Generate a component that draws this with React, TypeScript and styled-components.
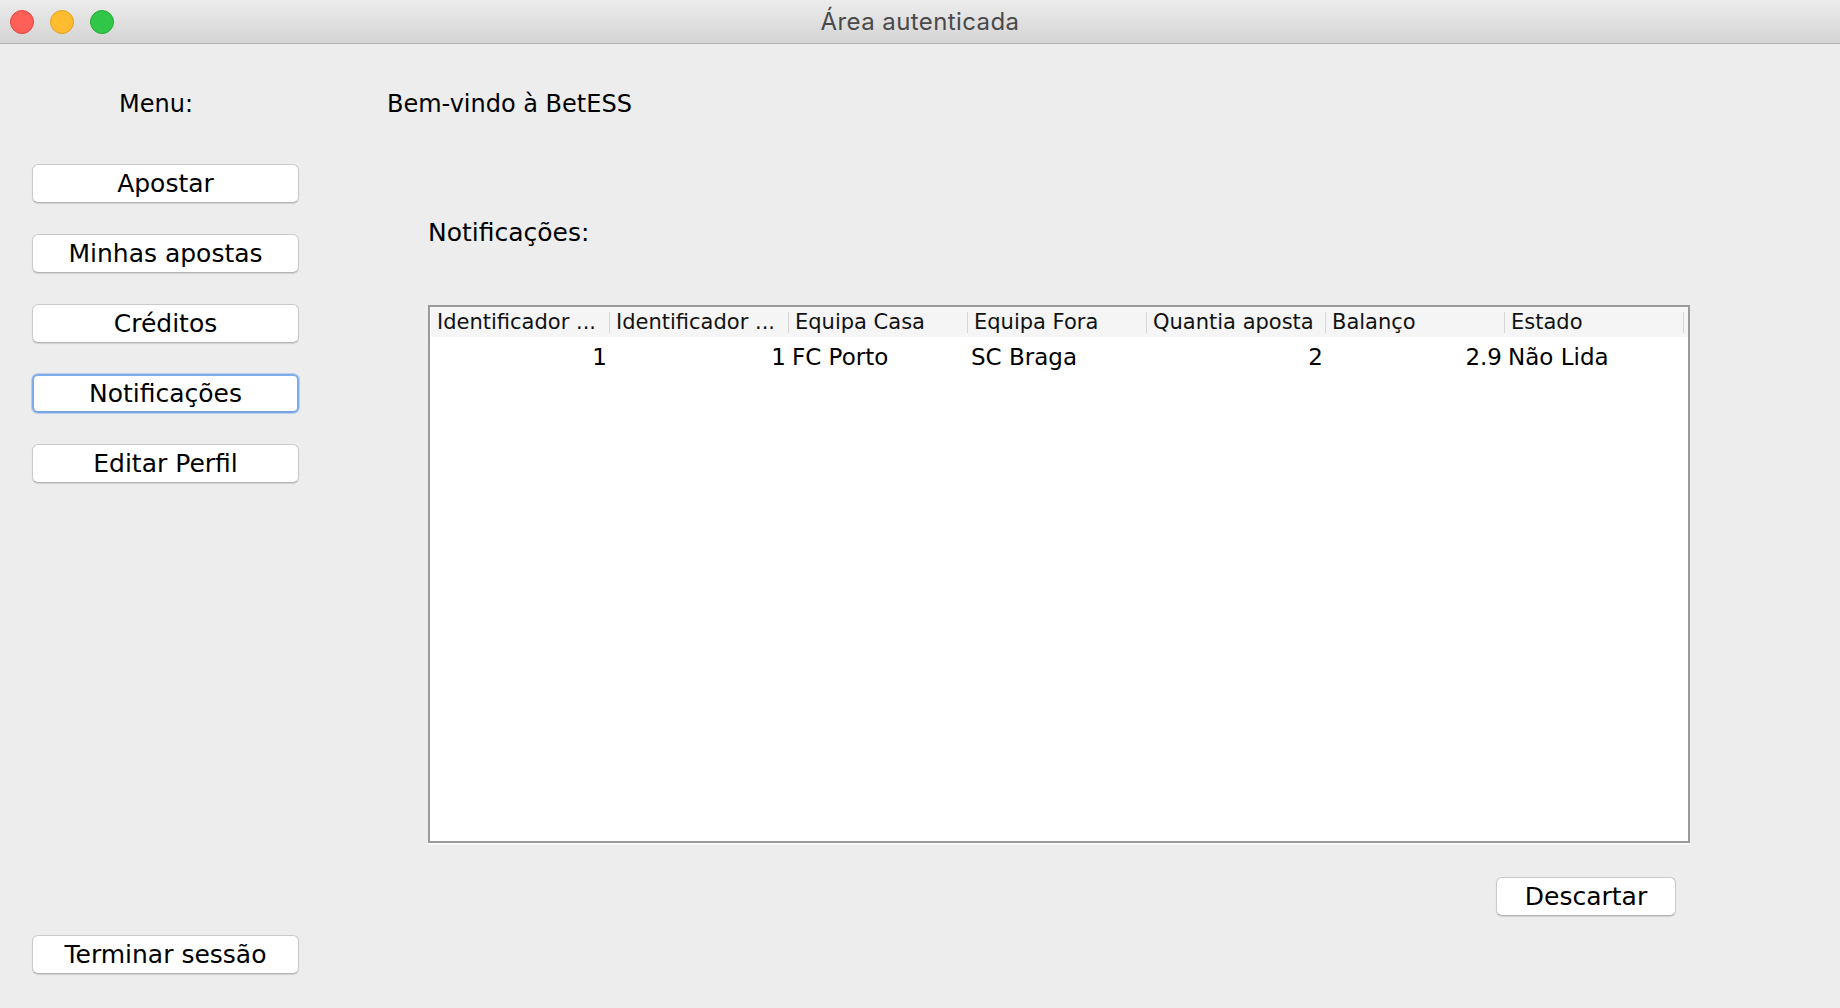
import React from "react";
import styled, { createGlobalStyle } from "styled-components";

const GlobalStyle = createGlobalStyle`
  html, body { margin: 0; padding: 0; background: #ececec; }
  body { font-family: "DejaVu Sans", "Noto Sans", sans-serif; color: #000; }
  * { box-sizing: border-box; }
`;

const Window = styled.div`
  width: 1840px;
  height: 1008px;
  display: flex;
  flex-direction: column;
  background: #ededed;
  overflow: hidden;
`;

const TitleBar = styled.div`
  height: 44px;
  flex: none;
  display: grid;
  grid-template-columns: 1fr auto 1fr;
  align-items: center;
  background: linear-gradient(#ececec, #d4d4d4);
  border-bottom: 1px solid #b3b3b3;
`;

const Lights = styled.div`
  display: flex;
  gap: 16px;
  padding-left: 10px;
`;

const Light = styled.span<{ $fill: string; $edge: string }>`
  width: 24px;
  height: 24px;
  border-radius: 50%;
  background: ${(p) => p.$fill};
  border: 1px solid ${(p) => p.$edge};
`;

const Title = styled.div`
  font-family: Inter, "Liberation Sans", sans-serif;
  font-size: 24px;
  letter-spacing: 0.4px;
  color: #4a4a4a;
  padding-bottom: 1px;
`;

const Body = styled.div`
  flex: 1;
  display: flex;
  min-height: 0;
`;

const Sidebar = styled.div`
  width: 330px;
  flex: none;
  display: flex;
  flex-direction: column;
  padding: 48px 0 34px 32px;
`;

const MenuLabel = styled.div`
  font-size: 24px;
  line-height: 24px;
  margin-left: 87px;
  margin-bottom: 48px;
`;

const MenuList = styled.div`
  display: flex;
  flex-direction: column;
  gap: 31px;
`;

const Button = styled.button<{ $focused?: boolean; $width?: number }>`
  width: ${(p) => p.$width ?? 267}px;
  height: 39px;
  padding: 0;
  font-family: "DejaVu Sans", sans-serif;
  font-size: 25px;
  color: #000;
  background: #fff;
  border-radius: 6px;
  border: ${(p) => (p.$focused ? "2px solid #7eabea" : "1px solid #cacaca")};
  border-bottom-color: ${(p) => (p.$focused ? "#76a5e8" : "#b4b4b4")};
  box-shadow: ${(p) =>
    p.$focused ? "0 0 0 1px rgba(126,171,234,0.45)" : "0 1px 1px rgba(0,0,0,0.12)"};
  display: flex;
  align-items: center;
  justify-content: center;
  cursor: default;
`;

const Spacer = styled.div`
  flex: 1;
`;

const Main = styled.div`
  flex: 1;
  display: flex;
  flex-direction: column;
  padding-top: 48px;
`;

const Welcome = styled.div`
  font-size: 24px;
  line-height: 24px;
  padding-left: 57px;
`;

const Section = styled.div`
  display: flex;
  flex-direction: column;
  padding-left: 98px;
  width: ${98 + 1262}px;
`;

const SectionLabel = styled.div`
  font-size: 25px;
  line-height: 25px;
  margin-top: 104px;
  margin-bottom: 60px;
`;

const TableBox = styled.div`
  width: 1262px;
  height: 538px;
  background: #fff;
  border: 2px solid #9b9b9b;
  box-shadow: 0 2px 0 #f9f9f9;
  padding-left: 1px;
`;

const Grid = styled.div`
  display: grid;
  grid-template-columns: repeat(7, 179px);
`;

const HeaderRow = styled(Grid)`
  background: #f5f5f5;
  height: 30px;
  align-items: center;
`;

const HeaderCell = styled.div`
  height: 21px;
  line-height: 21px;
  font-size: 21px;
  padding-left: 6px;
  border-right: 1px solid #d6d6d6;
  white-space: nowrap;
  color: #111;
`;

const DataCell = styled.div<{ $num?: boolean }>`
  height: 40px;
  line-height: 40px;
  font-size: 23px;
  padding: ${(p) => (p.$num ? "0 3px 0 0" : "0 0 0 3px")};
  text-align: ${(p) => (p.$num ? "right" : "left")};
  white-space: nowrap;
`;

const Actions = styled.div`
  display: flex;
  justify-content: flex-end;
  padding-right: 14px;
  margin-top: 34px;
`;

const headers = [
  "Identificador ...",
  "Identificador ...",
  "Equipa Casa",
  "Equipa Fora",
  "Quantia aposta",
  "Balanço",
  "Estado",
];

const rows: { v: string; num: boolean }[][] = [
  [
    { v: "1", num: true },
    { v: "1", num: true },
    { v: "FC Porto", num: false },
    { v: "SC Braga", num: false },
    { v: "2", num: true },
    { v: "2.9", num: true },
    { v: "Não Lida", num: false },
  ],
];

const menu = ["Apostar", "Minhas apostas", "Créditos", "Notificações", "Editar Perfil"];

export default function App() {
  return (
    <Window>
      <GlobalStyle />
      <TitleBar>
        <Lights>
          <Light $fill="#fe5f57" $edge="#e2463f" />
          <Light $fill="#febc2e" $edge="#dfa023" />
          <Light $fill="#30c748" $edge="#22a835" />
        </Lights>
        <Title>Área autenticada</Title>
        <div />
      </TitleBar>
      <Body>
        <Sidebar>
          <MenuLabel>Menu:</MenuLabel>
          <MenuList>
            {menu.map((m) => (
              <Button key={m} $focused={m === "Notificações"}>
                {m}
              </Button>
            ))}
          </MenuList>
          <Spacer />
          <Button>Terminar sessão</Button>
        </Sidebar>
        <Main>
          <Welcome>Bem-vindo à BetESS</Welcome>
          <Section>
            <SectionLabel>Notificações:</SectionLabel>
            <TableBox>
              <HeaderRow>
                {headers.map((h, i) => (
                  <HeaderCell key={i}>{h}</HeaderCell>
                ))}
              </HeaderRow>
              {rows.map((r, ri) => (
                <Grid key={ri}>
                  {r.map((c, ci) => (
                    <DataCell key={ci} $num={c.num}>
                      {c.v}
                    </DataCell>
                  ))}
                </Grid>
              ))}
            </TableBox>
            <Actions>
              <Button $width={180}>Descartar</Button>
            </Actions>
          </Section>
        </Main>
      </Body>
    </Window>
  );
}
